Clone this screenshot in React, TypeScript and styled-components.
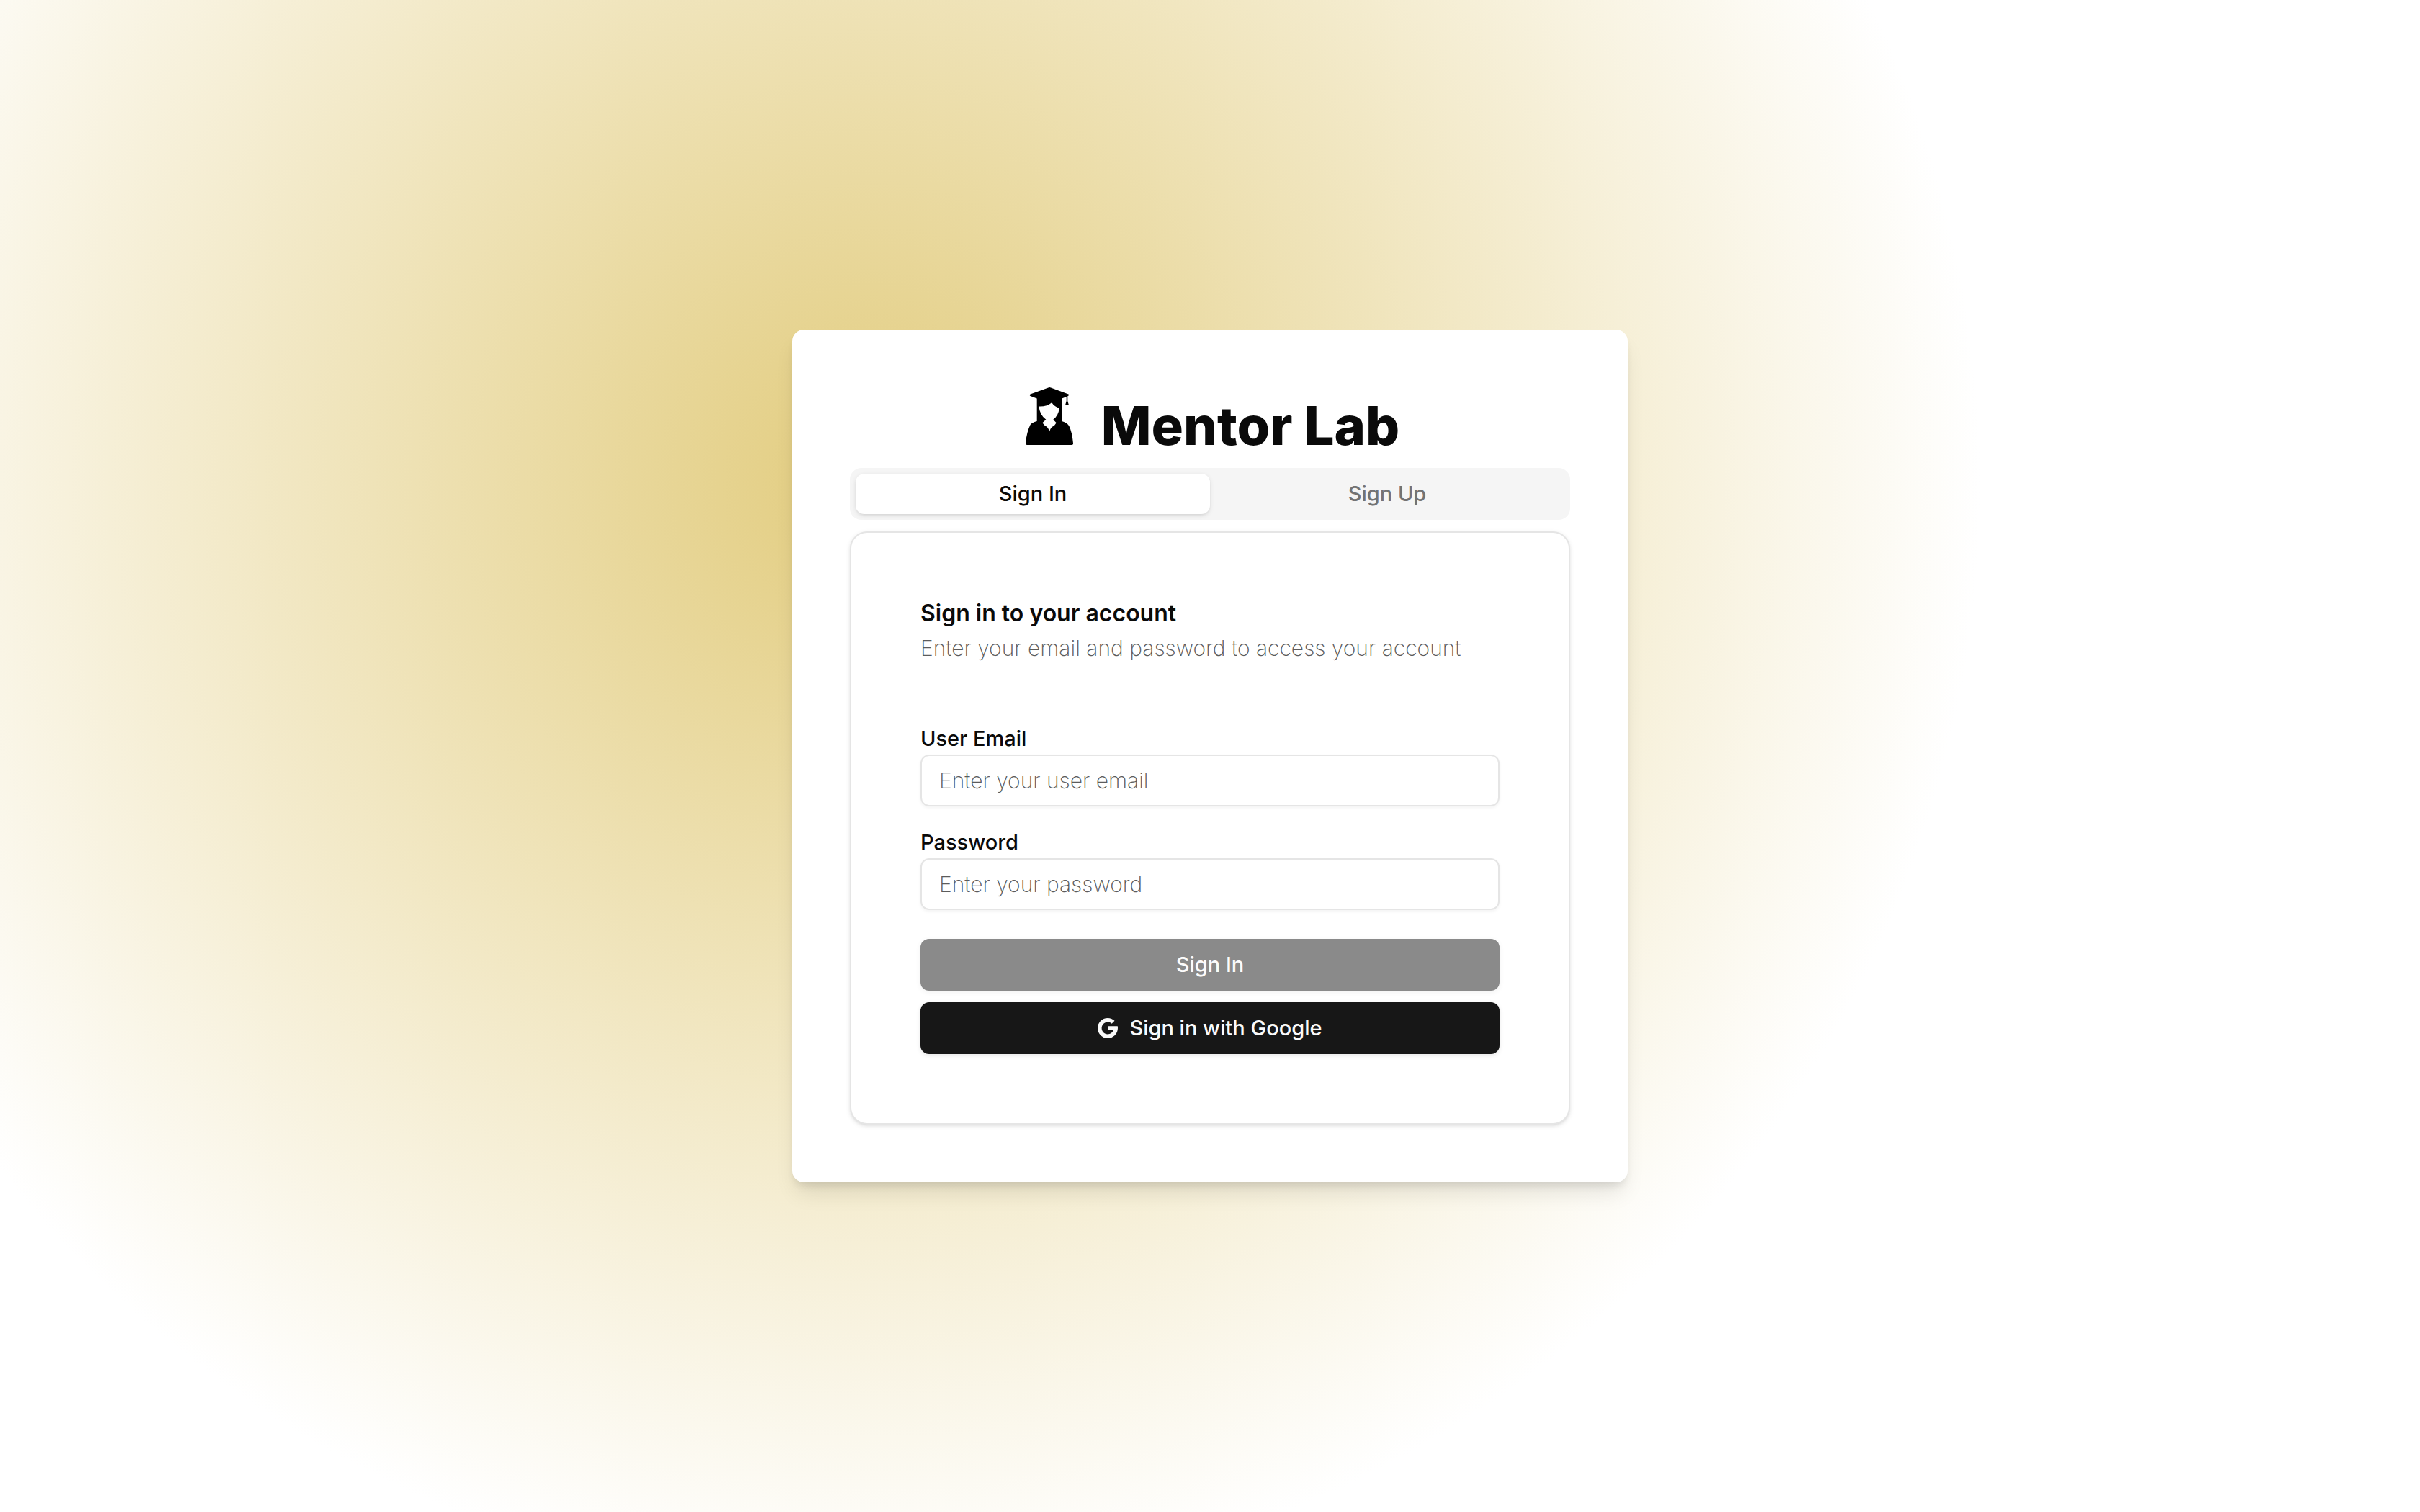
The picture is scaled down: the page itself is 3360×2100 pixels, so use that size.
import React, { useState } from "react";
import styled, { createGlobalStyle, css } from "styled-components";

const GlobalStyle = createGlobalStyle`
  *, *::before, *::after { box-sizing: border-box; }
  body {
    margin: 0;
    background: #fff;
    color: #0a0a0a;
    font-family: Inter, "Open Sans", sans-serif;
    -webkit-font-smoothing: antialiased;
  }
  h1, h2, p { margin: 0; }
  button, input { font: inherit; }
`;

const Page = styled.div`
  min-height: 100vh;
  display: flex;
  align-items: center;
  justify-content: center;
  background: radial-gradient(circle 1540px at 36% 32%, #e2cc7e, #ffffff);
`;

const Card = styled.main`
  width: 1160px;
  max-width: 100%;
  padding: 80px;
  border-radius: 16px;
  background: #fff;
  box-shadow: 0 20px 30px -6px rgba(0, 0, 0, 0.1), 0 8px 12px -4px rgba(0, 0, 0, 0.1);
`;

const Brand = styled.header`
  display: flex;
  align-items: baseline;
  justify-content: center;
  gap: 32px;
  height: 112px;
`;

const BrandIcon = styled.svg`
  width: 80px;
  height: 80px;
`;

const BrandName = styled.h1`
  font-size: 74px;
  line-height: 80px;
  font-weight: 800;
`;

const TabList = styled.div`
  display: grid;
  grid-template-columns: 1fr 1fr;
  padding: 8px;
  border-radius: 16px;
  background: #f5f5f5;
`;

const Tab = styled.button<{ $active: boolean }>`
  height: 56px;
  padding: 0;
  border: 0;
  border-radius: 12px;
  background: transparent;
  color: #737373;
  font-size: 29px;
  line-height: 40px;
  font-weight: 500;
  ${({ $active }) =>
    $active &&
    css`
      background: #fff;
      color: #0a0a0a;
      box-shadow: 0 2px 6px rgba(0, 0, 0, 0.1), 0 2px 4px -2px rgba(0, 0, 0, 0.1);
    `}
`;

const Panel = styled.section`
  margin-top: 16px;
  padding: 96px;
  border: 2px solid #e5e5e5;
  border-radius: 24px;
  background: #fff;
  box-shadow: 0 2px 6px rgba(0, 0, 0, 0.1), 0 2px 4px -2px rgba(0, 0, 0, 0.1);
`;

const PanelHeader = styled.div`
  display: grid;
  gap: 12px;
  margin-bottom: 92px;
`;

const PanelTitle = styled.h2`
  font-size: 32px;
  line-height: 32px;
  font-weight: 600;
`;

const PanelText = styled.p`
  color: #5c5c5c;
  font-size: 30px;
  line-height: 40px;
  font-weight: 200;
`;

const Form = styled.form`
  display: grid;
  gap: 36px;
`;

const Field = styled.div`
  display: grid;
  gap: 8px;
`;

const Label = styled.label`
  font-size: 29px;
  line-height: 28px;
  font-weight: 500;
`;

const TextInput = styled.input`
  width: 100%;
  height: 72px;
  padding: 0 24px;
  border: 2px solid #e5e5e5;
  border-radius: 12px;
  background: transparent;
  box-shadow: 0 2px 4px rgba(0, 0, 0, 0.05);
  color: #0a0a0a;
  font-size: 30px;
  font-weight: 200;
  outline: none;

  &::placeholder {
    color: #5c5c5c;
    opacity: 1;
  }
`;

const Actions = styled.div`
  display: grid;
  gap: 16px;
  padding-top: 4px;
`;

const Button = styled.button`
  display: flex;
  align-items: center;
  justify-content: center;
  gap: 16px;
  height: 72px;
  border: 0;
  border-radius: 12px;
  background: #171717;
  box-shadow: 0 2px 6px rgba(0, 0, 0, 0.1);
  color: #fafafa;
  font-size: 29px;
  line-height: 40px;
  font-weight: 500;

  &:disabled {
    opacity: 0.5;
  }
`;

const GoogleMark = styled.svg`
  width: 28px;
  height: 28px;
`;

function Graduate() {
  return (
    <BrandIcon viewBox="0 0 80 80" aria-hidden="true">
      <path
        fillRule="evenodd"
        d="M38.500 .4 Q40.300 -.4 42 .4 L66.500 9.500 Q68 10.500 66.500 11.500 L65.300 12.300 V19 L67 24.700 H62 L63.700 19 V13 L57.300 15.500 V47 Q65 49 67.500 54 Q71.500 62 73 77.500 Q73.200 80 71 80 H9 Q6.800 80 7 77.500 Q8.500 62 13.500 52 Q15.500 49 22.700 47 V15.500 L13.500 12 Q12 10.700 13.500 9.500 Z M25.300 26.500 Q36.500 27 43.300 21.300 Q46.500 26.500 53.800 29 Q52.500 39.500 45.300 44.700 L49.700 49.300 L46.500 53.500 Q42 54.500 40 61.500 Q38.500 55 34 53.500 L30.300 49.300 L35.300 44.700 Q27 39 25.300 26.500 Z"
      />
    </BrandIcon>
  );
}

export default function App() {
  const [tab, setTab] = useState<"in" | "up">("in");
  return (
    <>
      <GlobalStyle />
      <Page>
        <Card>
          <Brand>
            <Graduate />
            <BrandName>Mentor Lab</BrandName>
          </Brand>
          <TabList role="tablist">
            <Tab type="button" role="tab" aria-selected={tab === "in"} $active={tab === "in"} onClick={() => setTab("in")}>
              Sign In
            </Tab>
            <Tab type="button" role="tab" aria-selected={tab === "up"} $active={tab === "up"} onClick={() => setTab("up")}>
              Sign Up
            </Tab>
          </TabList>
          <Panel>
            <PanelHeader>
              <PanelTitle>Sign in to your account</PanelTitle>
              <PanelText>Enter your email and password to access your account</PanelText>
            </PanelHeader>
            <Form onSubmit={(event) => event.preventDefault()}>
              <Field>
                <Label htmlFor="email">User Email</Label>
                <TextInput id="email" type="email" placeholder="Enter your user email" />
              </Field>
              <Field>
                <Label htmlFor="password">Password</Label>
                <TextInput id="password" type="password" placeholder="Enter your password" />
              </Field>
              <Actions>
                <Button type="submit" disabled>
                  Sign In
                </Button>
                <Button type="button">
                  <GoogleMark viewBox="4 4 40 40" fill="currentColor" aria-hidden="true">
                    <path d="M43.611,20.083H42V20H24v8h11.303c-1.649,4.657-6.080,8-11.303,8c-6.627,0-12-5.373-12-12c0-6.627,5.373-12,12-12c3.059,0,5.842,1.154,7.961,3.039l5.657-5.657C34.046,6.053,29.268,4,24,4C12.955,4,4,12.955,4,24c0,11.045,8.955,20,20,20c11.045,0,20-8.955,20-20C44,22.659,43.862,21.350,43.611,20.083z" />
                  </GoogleMark>
                  Sign in with Google
                </Button>
              </Actions>
            </Form>
          </Panel>
        </Card>
      </Page>
    </>
  );
}
